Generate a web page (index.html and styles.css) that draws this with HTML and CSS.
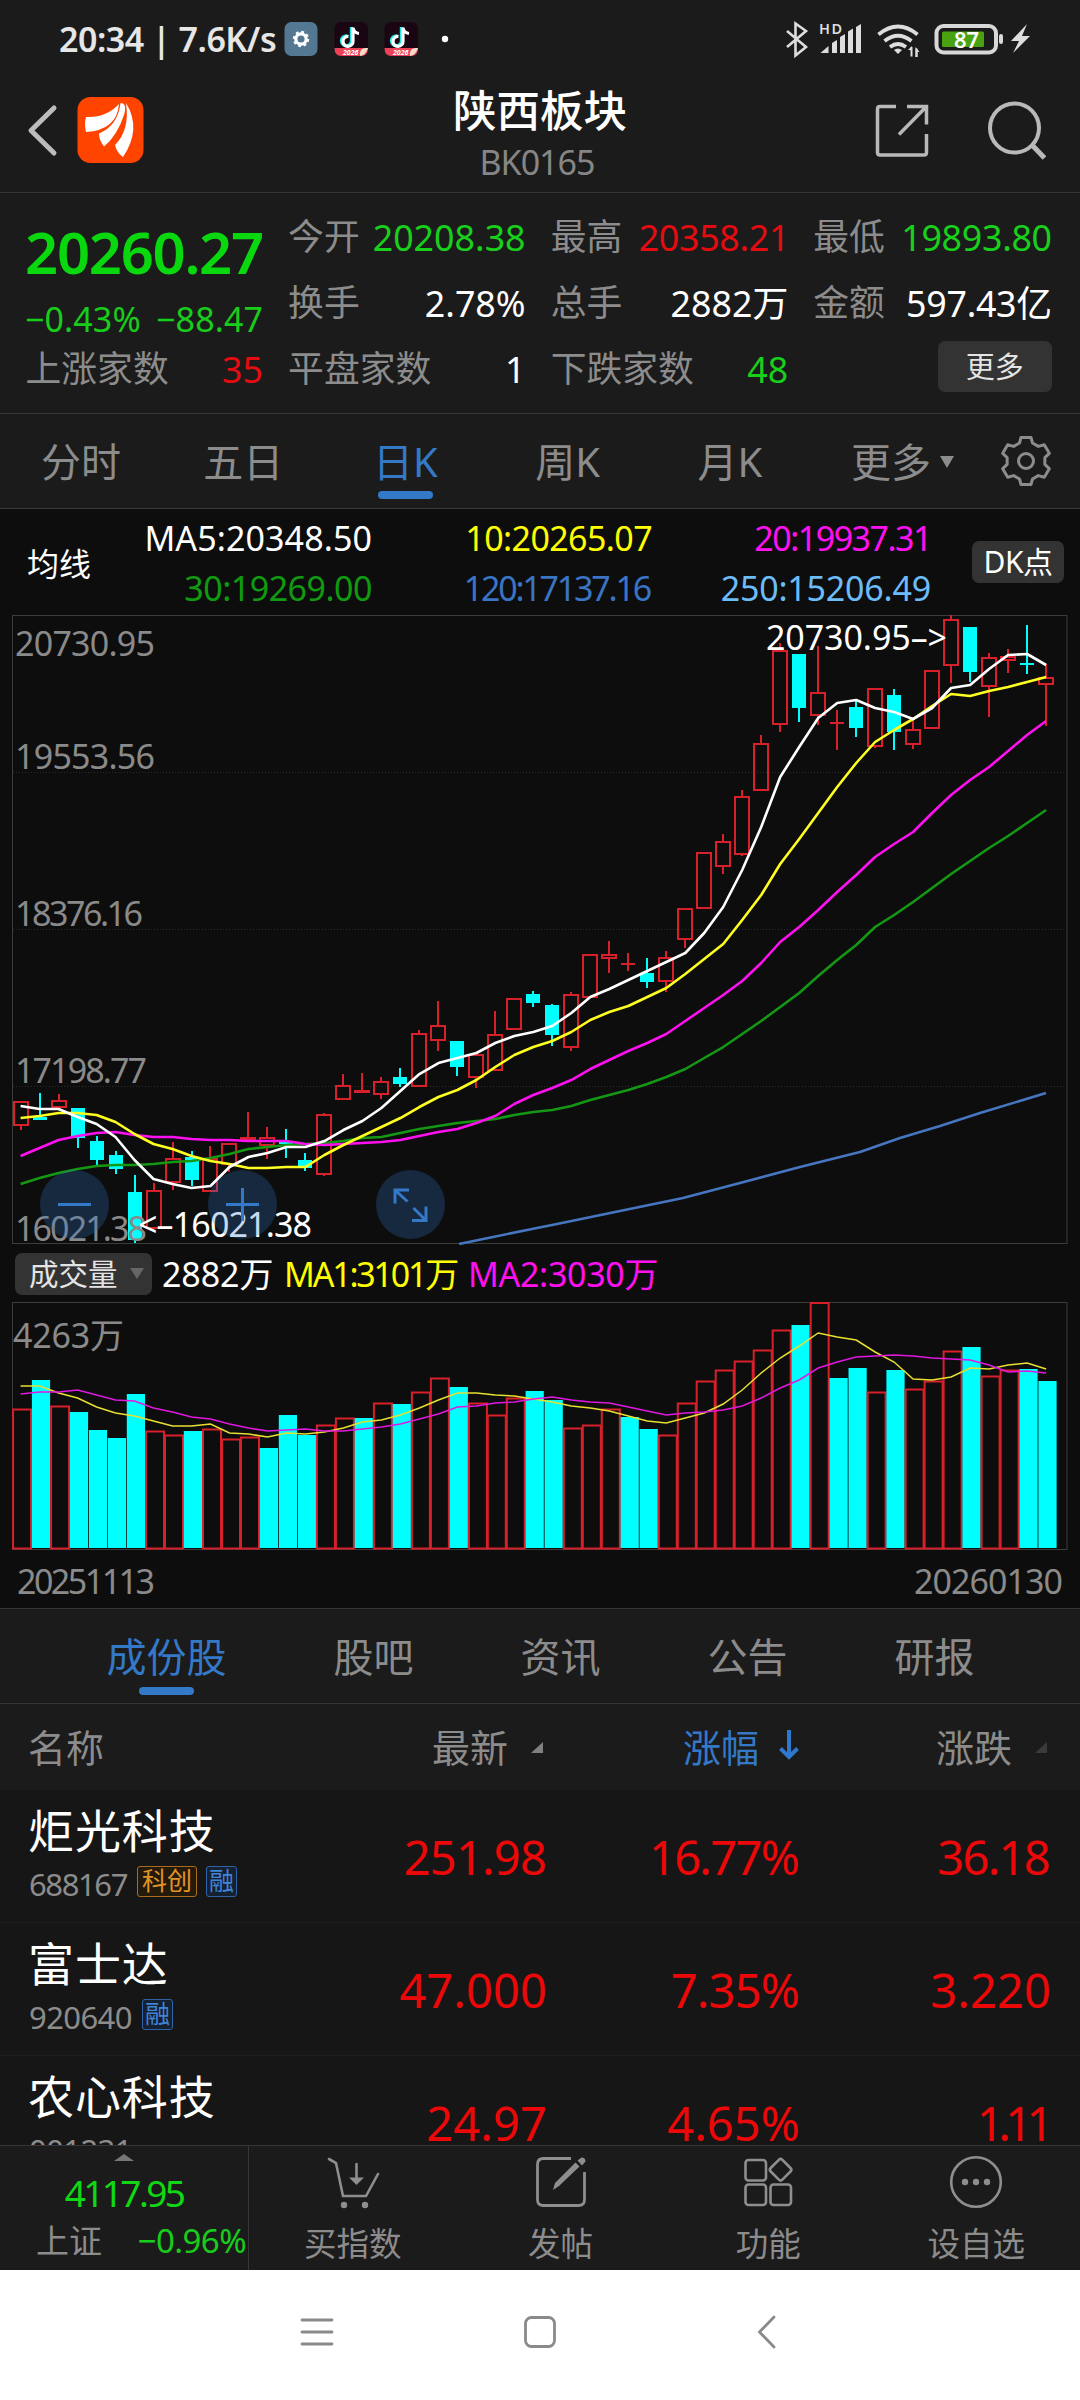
FILE: index.html
```html
<!DOCTYPE html>
<html lang="zh-CN">
<head>
<meta charset="utf-8">
<title>陕西板块 BK0165</title>
<link rel="stylesheet" href="styles.css">
</head>
<body>
<div class="screen">
  <div class="status">
    <span class="status-time">20:34 | 7.6K/s</span>
    <svg class="status-apps" width="166" height="36" viewBox="284 21 166 36">
      <rect x="284.500" y="22" width="33" height="34" rx="7" fill="#547792"/>
      <circle cx="301" cy="39" r="5.200" fill="none" stroke="#fff" stroke-width="3.200"/>
      <circle cx="301" cy="39" r="7" fill="none" stroke="#fff" stroke-width="2.400" stroke-dasharray="2.750 2.750"/>
      <g id="app">
        <path d="M334.500 48V29q0-7 7-7h19.500q7 0 7 7v19z" fill="#1a0613"/>
        <path d="M334.500 48h33.500q0 8-7 8h-19.500q-7 0-7-8z" fill="#ee4058"/>
        <text x="343" y="54.500" font-size="7" font-weight="700" fill="#fff" font-style="italic">2026</text>
        <path d="M366 48q-7 0-6 8 6-1 8-8z" fill="#f6d9c9"/>
        <path d="M351.500 27v13.500a5 5 0 1 1-4.500-4.600" fill="none" stroke="#25e5e0" stroke-width="3.400"/>
        <path d="M353 27.500v13.500a5 5 0 1 1-4.500-4.600M353 28q1 5 6 5.500" fill="none" stroke="#fff" stroke-width="3.200"/>
      </g>
      <use href="#app" x="50"/>
      <circle cx="445" cy="39" r="3.200" fill="#fff"/>
    </svg>
    <svg class="status-right" width="250" height="40" viewBox="784 19 250 40">
      <path d="M787 31l19 16-10.500 8.500V23.500L806 31 787 47" fill="none" stroke="#ddd" stroke-width="2.600"/>
      <text x="819" y="34" font-size="14.500" font-weight="600" fill="#ddd" textLength="23">HD</text>
      <path d="M820.500 53l8-7v7zM832 43l5-3v13h-5zM840 37l5-3v19h-5zM848 31.500l5-3V53h-5zM856 27l5-3v29h-5z" fill="#ddd"/>
      <g fill="none" stroke="#ddd" stroke-width="3.800">
        <path d="M878.500 34.500q19.500-16 39 0M884.500 41q13.500-10.500 27 0M890 47q8-6 16 0"/>
      </g>
      <path d="M894 50q4-3 8 0l-4 4zM911 56v-6h-3l4-4v10zM915.500 57V47l4 5h-2v5z" fill="#ddd"/>
      <path d="M911.500 47v9.500M916.500 57V48.500" stroke="#ddd" stroke-width="2"/>
      <rect x="936.500" y="26" width="59.500" height="26.500" rx="7" fill="none" stroke="#d8d8d8" stroke-width="4"/>
      <rect x="942" y="31.500" width="42" height="15.500" rx="1.500" fill="#49a310"/>
      <rect x="999" y="34" width="4" height="10" rx="2" fill="#d8d8d8"/>
      <text x="954" y="48" font-size="22" font-weight="600" fill="#fff" textLength="25">87</text>
      <path d="M1027 24l-16 17h8l-6 12 17-17h-8z" fill="#ddd"/>
    </svg>
  </div>

  <header class="header">
    <div class="header-left">
      <svg width="36" height="60" viewBox="24 100 36 60"><path d="M54 108L31 130.500 54 153" fill="none" stroke="#bcbcbc" stroke-width="5" stroke-linecap="round" stroke-linejoin="round"/></svg>
      <svg class="logo" width="68" height="68" viewBox="77 97 68 68">
        <rect x="77.500" y="98" width="66" height="66" rx="13" fill="#ff4400"/>
        <path d="M86 118q20 1 33-13-2 26-33 28-2-8 0-15z" fill="#fff"/>
        <path d="M120.500 104q7 0 3.500 12-7 21-20 31.500-5-6-5-13 19-8 21.500-30.500z" fill="#fff"/>
        <path d="M126 104q16 26-3 54-6-4-8-12 15-15 11-42z" fill="#fff"/>
      </svg>
    </div>
    <div class="header-title">
      <h1>陕西板块</h1>
      <p>BK0165</p>
    </div>
    <svg class="header-right" width="180" height="64" viewBox="870 98 180 64" fill="none" stroke="#b9b9b9">
      <path d="M896 106.500h-16q-2.500 0-2.500 2.500v43.500q0 2.500 2.500 2.500h44q2.500 0 2.500-2.500V134M907 106.500h19.500V124.500M925 108l-26 26.500" stroke-width="3.500"/>
      <circle cx="1014.500" cy="128" r="24.500" stroke-width="4"/>
      <path d="M1032 145l12.500 13" stroke-width="5"/>
    </svg>
  </header>

  <section class="quote">
    <div class="quote-main">
      <div class="price">20260.27</div>
      <div class="change"><span>−0.43%</span><span>−88.47</span></div>
    </div>
    <div class="cell"><span>今开</span><b class="green open">20208.38</b></div>
    <div class="cell"><span>最高</span><b class="red tight">20358.21</b></div>
    <div class="cell"><span>最低</span><b class="green tight">19893.80</b></div>
    <div class="cell"><span>换手</span><b>2.78%</b></div>
    <div class="cell"><span>总手</span><b>2882万</b></div>
    <div class="cell"><span>金额</span><b class="tight">597.43亿</b></div>
    <div class="cell"><span>上涨家数</span><b class="red">35</b></div>
    <div class="cell"><span>平盘家数</span><b>1</b></div>
    <div class="cell"><span>下跌家数</span><b class="green">48</b></div>
    <div class="cell cell-end"><button class="more">更多</button></div>
  </section>

  <nav class="periods">
    <span>分时</span><span>五日</span><span class="on">日K</span><span>周K</span><span>月K</span>
    <span class="drop">更多<i class="down"></i></span>
    <svg width="54" height="54" viewBox="-27 -27 54 54" fill="none" stroke="#8c8c8c" stroke-width="3" stroke-linejoin="round">
      <path d="M-6.500-18L-5-23.500H5L6.500-18 12.300-14.600 18.300-16.300 23.300-7.700 18.850-3.400V3.400L23.300 7.700 18.300 16.300 12.300 14.600 6.500 18 5 23.500H-5L-6.500 18-12.300 14.600-18.300 16.300-23.300 7.700-18.850 3.400V-3.400L-23.300-7.700-18.300-16.300-12.300-14.600z"/>
      <circle r="7.500"/>
    </svg>
  </nav>

  <section class="chart">
    <div class="averages">
      <span class="avg-name">均线</span>
      <div class="avg-grid">
        <span class="white ma5">MA5:20348.50</span><span class="yellow ma10">10:20265.07</span><span class="magenta ma20">20:19937.31</span>
        <span class="dgreen ma30">30:19269.00</span><span class="blue ma120">120:17137.16</span><span class="sky ma250">250:15206.49</span>
      </div>
      <button class="dk">DK点</button>
    </div>
    <svg class="plot" width="1080" height="630" viewBox="0 615 1080 630">
      <rect x="12.500" y="615.500" width="1054.500" height="628" class="frame"/>
      <path class="grid" d="M13 772.500H1067M13 929.500H1067M13 1086.500H1067"/>
      <g id="candles"></g>
      <g id="lines" class="lines"></g>
      <g class="axis">
        <text x="15" y="656" textLength="140">20730.95</text>
        <text x="15" y="769" textLength="140">19553.56</text>
        <text x="15" y="926" textLength="128">18376.16</text>
        <text x="15" y="1083" textLength="132">17198.77</text>
        <text x="15" y="1240.500" textLength="132">16021.38</text>
      </g>
      <g class="mark">
        <text x="138" y="1237" textLength="174">&lt;–16021.38</text>
        <text x="766" y="650" textLength="181">20730.95–&gt;</text>
      </g>
      <g class="ctrl" fill="none">
        <circle cx="74.500" cy="1204.500" r="34.500"/><circle cx="242.500" cy="1204.500" r="34.500"/><circle cx="410.500" cy="1204.500" r="34.500"/>
        <path d="M58 1204.500H91M226 1204.500H259M242.500 1188V1221"/>
        <path d="M407.500 1201.500L396 1191M395 1203.500V1190H409M413.500 1208L425 1219.500M426 1206.500V1220.500H412"/>
      </g>
    </svg>
    <div class="vol-head">
      <button>成交量<i class="down"></i></button>
      <span class="white v1">2882万</span><span class="yellow v2">MA1:3101万</span><span class="magenta v3">MA2:3030万</span>
    </div>
    <svg class="plot" width="1080" height="306" viewBox="0 1302 1080 306">
      <rect x="12.500" y="1302.500" width="1054.500" height="247" class="frame"/>
      <g id="volume"></g>
      <g id="vlines" class="vlines"></g>
      <g class="axis">
        <text x="13" y="1348" textLength="111">4263万</text>
        <text x="17" y="1594" textLength="138">20251113</text>
        <text x="914" y="1594" textLength="149">20260130</text>
      </g>
    </svg>
  </section>

  <nav class="tabs">
    <span class="on">成份股</span><span>股吧</span><span>资讯</span><span>公告</span><span>研报</span>
  </nav>

  <section class="list">
    <div class="row head">
      <span>名称</span>
      <span class="num">最新<i class="corner"></i></span>
      <span class="num sort">涨幅<svg width="22" height="32" viewBox="0 0 22 32"><path d="M11 1V28M2.500 19.500l8.500 8.500 8.500-8.500" fill="none" stroke="#2f78d0" stroke-width="4"/></svg></span>
      <span class="num">涨跌<i class="corner dim"></i></span>
    </div>
    <div class="rows">
      <div class="row stock">
        <div><h2>炬光科技</h2><p><span class="c1">688167</span><em class="kc">科创</em><em>融</em></p></div>
        <b>251.98</b><b class="narrow">16.77%</b><b class="narrow">36.18</b>
      </div>
      <div class="row stock">
        <div><h2>富士达</h2><p><span>920640</span><em>融</em></p></div>
        <b class="wide">47.000</b><b>7.35%</b><b class="wide">3.220</b>
      </div>
      <div class="row stock">
        <div><h2>农心科技</h2><p><span>001231</span></p></div>
        <b class="wide">24.97</b><b class="wide">4.65%</b><b class="ones">1.11</b>
      </div>
    </div>
  </section>

  <footer class="toolbar">
    <div class="index">
      <i class="up"></i>
      <strong>4117.95</strong>
      <div><span>上证</span><span class="pct">−0.96%</span></div>
    </div>
    <div class="tool">
      <svg width="56" height="56" viewBox="324 2154 56 56" fill="none" stroke="#8e8e8e" stroke-width="2.600" stroke-linecap="round">
        <path d="M328 2159l7 4 7 33h23l12-22M355.500 2164v14"/><path d="M348 2177.500h15l-7.500 7.500z" fill="#8e8e8e" stroke="none"/>
        <circle cx="343" cy="2205" r="3.200" fill="#8e8e8e" stroke="none"/><circle cx="364" cy="2205" r="3.200" fill="#8e8e8e" stroke="none"/>
      </svg>
      <span>买指数</span>
    </div>
    <div class="tool">
      <svg width="56" height="56" viewBox="532 2154 56 56" fill="none" stroke="#8e8e8e" stroke-width="2.800">
        <path d="M570 2158.500H542.500q-6 0-6 6v35q0 6 6 6h35q6 0 6-6V2172"/>
        <path d="M552 2190l2-7 20.500-20.500 4 4L558 2186zM576.500 2160.500l4-3q4 0 4 4l-3.500 4z" fill="#8e8e8e" stroke="none"/>
      </svg>
      <span>发帖</span>
    </div>
    <div class="tool">
      <svg width="56" height="56" viewBox="740 2154 56 56" fill="none" stroke="#8e8e8e" stroke-width="2.600">
        <rect x="745.500" y="2160" width="20.500" height="20.500" rx="3"/><rect x="745.500" y="2184.500" width="20.500" height="20.500" rx="3"/><rect x="770.500" y="2184.500" width="20.500" height="20.500" rx="3"/>
        <rect x="772.400" y="2161.500" width="16.500" height="16.500" rx="2.500" transform="rotate(45 780.600 2169.700)"/>
      </svg>
      <span>功能</span>
    </div>
    <div class="tool">
      <svg width="56" height="56" viewBox="948 2154 56 56" fill="none" stroke="#8e8e8e" stroke-width="2.600">
        <circle cx="976" cy="2182" r="24.800"/><g fill="#8e8e8e" stroke="none"><circle cx="965" cy="2182" r="3.200"/><circle cx="976" cy="2182" r="3.200"/><circle cx="987" cy="2182" r="3.200"/></g>
      </svg>
      <span>设自选</span>
    </div>
  </footer>

  <div class="sysnav">
    <svg width="40" height="40" viewBox="-20 -20 40 40"><path d="M-15-12H15M-15 0H15M-15 12H15"/></svg>
    <svg width="40" height="40" viewBox="-20 -20 40 40"><rect x="-14.500" y="-14.500" width="29" height="29" rx="6"/></svg>
    <svg width="40" height="40" viewBox="-20 -20 40 40"><path d="M11-15L-3.500 0 11 15"/></svg>
  </div>
</div>
<script src="chart.js"></script>
</body>
</html>
```
FILE: styles.css
```css
* { box-sizing: border-box; margin: 0; padding: 0; }
body { width: 1080px; background: #1b1b1b; color: #8c8c8c; font-family: "Noto Sans", "Noto Sans CJK SC", sans-serif; }
svg { display: block; flex: none; }
button { border: 0; font: inherit; color: #e4e4e4; background: #333; border-radius: 7px; }
i, em { font-style: normal; }
.screen { width: 1080px; height: 2400px; overflow: hidden; display: flex; flex-direction: column; }
.screen > * { flex: none; }

.white { color: #fff; }
.yellow { color: #ff0; }
.magenta { color: #ff10f0; }
.dgreen { color: #109a10; }
.blue { color: #3a74c4; }
.sky { color: #6cbcf8; }
.green { color: #0ad80e; }
.red { color: #ec0808; }
.down { display: inline-block; border: 7px solid transparent; border-top: 12px solid #8c8c8c; border-bottom: 0; }

.status { height: 78px; padding: 0 46px 0 59px; display: flex; align-items: center; }
.status-time { width: 225px; font-size: 34px; font-weight: 600; line-height: 40px; color: #e6e6e6; letter-spacing: -.5px; white-space: nowrap; }
.status-right { margin-left: auto; }

.header { height: 115px; padding: 0 30px 0 24px; border-bottom: 1px solid #363636; display: grid; grid-template-columns: 300px 1fr 300px; }
.header-left { display: flex; align-items: center; gap: 17px; padding-bottom: 10px; }
.header-title { text-align: center; padding: 4px 0 0 6px; }
.header-title h1 { font-size: 43.500px; font-weight: 500; line-height: 56px; color: #fff; }
.header-title p { margin-left: -6px; font-size: 34px; line-height: 48px; letter-spacing: -1px; color: #868686; }
.header-right { justify-self: end; margin-top: 20px; }

.quote { height: 221px; padding: 11px 29px 0 27px; border-bottom: 1px solid #363636; display: grid; grid-template-columns: repeat(4, 236px); grid-auto-rows: 66px; column-gap: 26.600px; }
.quote-main { grid-row: span 2; color: #0ad80e; white-space: nowrap; }
.price { margin-left: -2px; font-size: 58px; font-weight: 600; line-height: 95px; letter-spacing: -1.300px; }
.change { margin-left: -2px; display: flex; justify-content: space-between; font-size: 34px; line-height: 40px; color: #18cc1c; letter-spacing: .1px; }
.cell { display: flex; justify-content: space-between; align-items: center; font-size: 35.800px; line-height: 66px; white-space: nowrap; }
.cell span { margin: -2px 0 0 -1.500px; }
.cell b { margin-top: -1px; font-weight: 400; color: #fff; }
.cell b.green { color: #18d01c; }
.cell b.red { color: #e40c10; }
.cell b.tight { letter-spacing: -.3px; margin-right: -1px; }
.cell-end { justify-content: flex-end; }
.more { width: 114px; height: 51px; margin: -6px -1px 0 0; font-size: 29px; line-height: 51px; }

.periods { height: 95px; border-bottom: 1px solid #3a3a3a; display: flex; align-items: center; font-size: 40px; line-height: 60px; }
.periods span { width: 162.200px; padding-top: 1px; text-align: center; display: flex; flex-direction: column; align-items: center; }
.periods .on, .tabs .on { color: #3478c8; }
.periods .on::after, .tabs .on::after { content: ""; display: block; width: 55px; height: 8px; margin-bottom: -8px; border-radius: 4px; background: #3478c8; }
.periods .on::after { margin-top: -1px; }
.periods .drop { flex-direction: row; justify-content: center; gap: 9px; width: 183px; }
.periods svg { margin-left: 5px; }

.chart { background: #0d0d0d; }
.averages { height: 106px; padding-left: 27px; display: flex; align-items: center; }
.avg-name { width: 64px; font-size: 32px; line-height: 40px; color: #fff; margin-top: 4px; }
.avg-grid { display: grid; grid-template-columns: 281px 280px 279px; grid-auto-rows: 50px; font-size: 34px; line-height: 50px; text-align: right; margin-top: 2px; }
.ma5 { letter-spacing: .1px; }
.ma10 { letter-spacing: -.6px; }
.ma20 { letter-spacing: -1.500px; }
.ma30 { letter-spacing: -.5px; }
.ma120 { letter-spacing: -2.200px; padding-right: 2px; }
.ma250 { letter-spacing: -.2px; }
.dk { width: 92px; height: 42px; margin-left: 41px; font-size: 30px; line-height: 42px; letter-spacing: -.5px; color: #fff; }
.plot text { font-size: 34px; }
.frame { fill: none; stroke: #3c3c3c; }
.grid { stroke: #2b2b2b; stroke-dasharray: 1 2; fill: none; }
.axis { fill: #8a8a8a; }
.mark { fill: #fff; }
.lines { fill: none; stroke-width: 2.600; stroke-linejoin: round; }
.vlines { fill: none; stroke-width: 1.500; }
.up-bar { fill: none; stroke: #d8202a; stroke-width: 2; }
.down-bar { fill: #0ff; }
.ctrl circle { fill: #3478c8; fill-opacity: .27; }
.ctrl path { stroke: #3478c8; stroke-width: 3; }

.vol-head { height: 57px; padding-left: 15px; display: flex; align-items: center; font-size: 34px; line-height: 50px; white-space: nowrap; }
.vol-head button { width: 137px; height: 42px; padding-left: 14px; display: flex; align-items: center; gap: 12px; font-size: 29.500px; line-height: 42px; }
.vol-head .down { border-top-color: #666; border-top-width: 11px; }
.vol-head span { margin-top: 1px; }
.v1 { margin-left: 10px; width: 122px; letter-spacing: -.1px; }
.v2 { width: 184px; letter-spacing: -2.200px; }
.v3 { letter-spacing: -.3px; }

.tabs { height: 96px; padding: 1px 0 0 53px; border-top: 1px solid #363636; border-bottom: 1px solid #363636; display: flex; align-items: center; font-size: 40px; line-height: 60px; }
.tabs span { width: 187px; display: flex; flex-direction: column; align-items: center; }
.tabs .on { width: 227px; }

.row { display: grid; grid-template-columns: 300px 217px 253px 251px; padding-left: 29px; }
.head { height: 86px; align-items: center; font-size: 38px; line-height: 60px; }
.head > :first-child { margin-left: -1px; }
.num { display: flex; align-items: center; justify-content: flex-end; }
.corner { margin: 0 3px 0 23px; border-left: 12px solid transparent; border-bottom: 11px solid #808080; }
.corner.dim { border-bottom-color: #3a3a3a; }
.sort { color: #3478c8; }
.sort svg { margin: -4px -1px 0 19px; }
.rows { height: 355px; overflow: hidden; background: #161616; }
.stock { height: 133px; border-bottom: 1px solid #1e1e1e; }
.stock h2 { margin-left: -1px; padding-top: 12px; font-size: 46px; font-weight: 400; line-height: 56px; letter-spacing: .9px; color: #fff; white-space: nowrap; }
.stock p { display: flex; align-items: center; height: 44px; margin-top: 4px; }
.stock p span { width: 113px; font-size: 31px; line-height: 44px; letter-spacing: -.6px; }
.stock p .c1 { width: 108px; letter-spacing: -1.400px; }
.stock em { height: 31px; padding: 0 2px; margin: -5px 9px 0 0; border: 1.500px solid #2d64a8; border-radius: 3px; background: #152030; color: #4184d4; font-size: 25px; line-height: 27px; }
.stock em.kc { padding: 0 4px; border-color: #a86c1c; background: #241a0c; color: #e09428; }
.stock b { text-align: right; font-size: 47px; font-weight: 400; line-height: 134px; color: #ec0808; letter-spacing: -.8px; }
.stock b.wide { letter-spacing: .1px; margin-right: -1px; }
.stock b.narrow { letter-spacing: -1.700px; padding-right: 1px; }
.stock b.ones { letter-spacing: -5.500px; padding-right: 5px; margin-right: -3px; }

.toolbar { height: 125px; border-top: 1px solid #363636; display: flex; }
.index { width: 249px; border-right: 1px solid #363636; display: flex; flex-direction: column; align-items: center; color: #10d814; white-space: nowrap; }
.up { border: 10px solid transparent; border-top: 0; border-bottom: 7px solid #777; margin-top: 8px; }
.index strong { font-size: 37px; font-weight: 400; line-height: 50px; margin-top: 7px; letter-spacing: -2.600px; }
.index div { align-self: stretch; display: flex; justify-content: space-between; padding: 0 2px 0 36px; font-size: 33px; line-height: 44px; margin-top: 1px; color: #8c8c8c; }
.index .pct { color: #18cc1c; letter-spacing: -.6px; }
.tool { width: 207.800px; display: flex; flex-direction: column; align-items: center; padding-top: 8px; font-size: 32.500px; line-height: 44px; }
.tool span { margin-top: 12px; }

.sysnav { height: 130px; background: #fff; display: flex; padding: 42px 0 0 297px; gap: 183px; }
.sysnav svg { fill: none; stroke: #8a8a8a; stroke-width: 2.800; stroke-linecap: round; margin-right: 0; }
```
FILE: chart.js
```js
// Candles: [rising, high, body top, body bottom, low]
const candles = [
  [1,1101,1101,1125,1130],[0,1093,1117,1120,1120],[1,1094,1100,1107,1107],[0,1108,1108,1138,1148],[0,1136,1141,1160,1165],
  [0,1151,1155,1169,1174],[0,1175,1192,1240,1243],[1,1183,1190,1228,1228],[1,1142,1158,1182,1190],[0,1151,1157,1180,1186],
  [1,1146,1158,1191,1191],[1,1143,1143,1164,1172],[1,1112,1137,1139,1139],[1,1127,1137,1145,1159],[0,1129,1142,1144,1158],
  [0,1153,1160,1168,1171],[1,1113,1114,1174,1176],[1,1074,1085,1099,1099],[1,1073,1090,1092,1092],[1,1077,1081,1094,1099],
  [0,1068,1077,1084,1087],[1,1030,1033,1086,1086],[1,1001,1025,1040,1051],[0,1041,1041,1067,1076],[1,1054,1054,1077,1088],
  [1,1011,1034,1070,1070],[1,998,998,1029,1029],[0,991,994,1003,1007],[0,1004,1005,1035,1046],[1,992,994,1047,1051],
  [1,954,954,997,997],[1,941,954,958,973],[1,953,963,964,971],[0,958,973,982,988],[1,951,957,981,992],
  [1,908,908,939,948],[1,852,852,908,908],[1,834,841,866,874],[1,790,796,854,856],[1,735,743,790,790],
  [1,643,650,724,732],[0,654,654,708,722],[1,646,692,715,725],[1,710,722,723,750],[0,701,707,728,737],
  [1,688,688,746,748],[0,689,695,732,750],[1,719,729,744,749],[1,670,670,728,728],[1,615,619,665,683],
  [0,627,627,672,682],[1,653,657,686,717],[1,649,656,660,673],[0,625,663,665,674],[1,664,677,684,726]
];
const averages = {
  '#149814': [1184,1178,1173,1169,1166,1165,1165,1164,1162,1161,1158,1154,1149,1147,1145,1144,1143,1141,1138,1137,1133,1129,1126,1123,1121,1119,1115,1112,1110,1106,1100,1095,1090,1084,1077,1069,1058,1047,1034,1021,1007,993,976,960,945,927,915,902,888,874,861,848,836,823,810],
  '#ff10f0': [1156,1148,1140,1136,1133,1132,1135,1137,1137,1139,1140,1140,1141,1141,1141,1144,1145,1144,1143,1142,1140,1136,1132,1129,1123,1116,1104,1095,1088,1080,1069,1060,1051,1043,1034,1021,1008,995,981,963,942,927,910,892,875,857,844,832,813,795,780,767,751,735,721],
  '#ffff20': [1118,1116,1113,1113,1115,1122,1134,1144,1149,1156,1161,1164,1168,1168,1167,1167,1155,1145,1136,1127,1118,1107,1097,1090,1080,1067,1055,1047,1041,1032,1020,1012,1006,997,988,974,959,944,920,895,864,839,813,787,763,742,730,719,706,694,696,691,687,682,677],
  '#ffffff': [1106,1109,1109,1117,1124,1137,1160,1179,1184,1188,1186,1167,1157,1153,1147,1147,1141,1130,1121,1108,1091,1074,1063,1058,1053,1043,1036,1032,1026,1013,997,989,980,971,962,953,933,907,870,827,777,747,718,703,700,708,712,719,708,688,685,669,655,654,665]
};
// Volume bars: [rising, top]
const volume = [
  [1,1409],[0,1380],[1,1406],[0,1412],[0,1430],[0,1438],[0,1394],[1,1431],[1,1435],[0,1431],[1,1429],[1,1439],[1,1437],[0,1448],[0,1415],
  [0,1435],[1,1425],[1,1418],[0,1418],[1,1403],[0,1404],[1,1392],[1,1378],[0,1387],[1,1403],[1,1415],[1,1398],[0,1391],[0,1400],[1,1428],
  [1,1425],[1,1409],[0,1417],[0,1429],[1,1435],[1,1403],[1,1381],[1,1370],[1,1361],[1,1350],[1,1330],[0,1325],[1,1302.5],[0,1378],[0,1368],
  [1,1392],[0,1370],[1,1389],[1,1381],[1,1351],[0,1347],[1,1376],[1,1370],[0,1369],[0,1381]
];
const volumeAverages = {
  '#e8e030': [1386,1386,1393,1398,1407,1413,1416,1421,1426,1426,1424,1433,1434,1437,1433,1434,1432,1428,1422,1420,1415,1408,1400,1393,1393,1395,1396,1399,1402,1406,1408,1411,1416,1421,1423,1418,1413,1404,1390,1373,1358,1346,1333,1337,1340,1352,1362,1379,1380,1377,1368,1369,1365,1363,1369],
  '#e018e0': [1394,1392,1392,1390,1395,1400,1401,1408,1412,1417,1419,1424,1428,1431,1430,1429,1431,1431,1429,1427,1424,1419,1414,1407,1406,1403,1402,1399,1397,1400,1402,1403,1407,1411,1415,1413,1412,1410,1406,1398,1388,1380,1368,1362,1357,1356,1355,1356,1358,1359,1360,1365,1372,1371,1373]
};

const step = 18.99;
const center = i => 20.6 + step * i;
const line = (ys, color) => `<path stroke="${color}" d="M${ys.map((y, i) => center(i).toFixed(1) + ' ' + y).join('L')}"/>`;

document.getElementById('candles').innerHTML = candles.map(([rising, high, top, bottom, low], i) => {
  const x = Math.round(center(i));
  if (rising) {
    return `<path class="up-bar" d="M${x} ${high}V${top}M${x - 7} ${top + 1}H${x + 7}V${bottom}H${x - 7}zM${x} ${bottom}V${low}"/>`;
  }
  return `<path class="down-bar" d="M${x - 7} ${top}h14V${bottom}h-14zM${x - 1} ${high}h2V${low}h-2z"/>`;
}).join('');

document.getElementById('lines').innerHTML =
  '<path stroke="#4676c0" d="M459 1244L532 1229 557 1224 683 1198 740 1183 800 1167 860 1152 900 1138 940 1126 980 1113 1046 1093"/>' +
  Object.entries(averages).map(([color, ys]) => line(ys, color)).join('');

document.getElementById('volume').innerHTML = volume.map(([rising, top], i) => {
  const x = 12.6 + step * i;
  return rising
    ? `<path class="up-bar" stroke-width="1.6" d="M${(x + 0.5).toFixed(1)} ${top + 0.5}h18V1548.5h-18z"/>`
    : `<path class="down-bar" d="M${(x + 0.3).toFixed(1)} ${top}h18.2V1548h-18.2z"/>`;
}).join('');

document.getElementById('vlines').innerHTML = Object.entries(volumeAverages).map(([color, ys]) => line(ys, color)).join('');
```
